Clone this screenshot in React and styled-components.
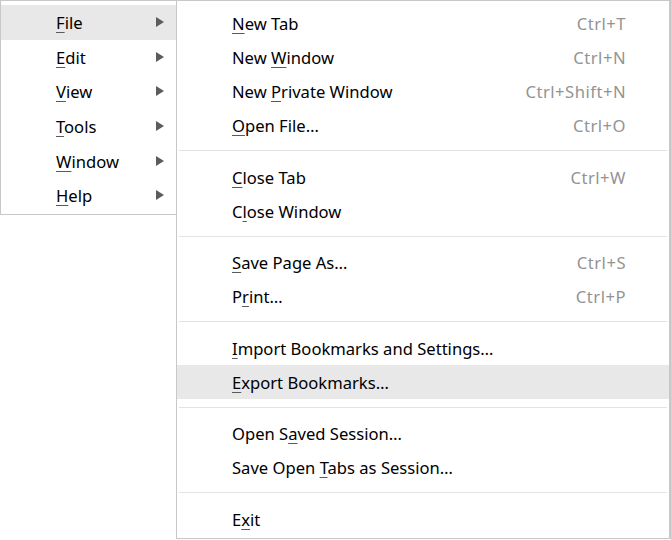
import React from 'react';
import styled, { createGlobalStyle } from 'styled-components';

const GlobalStyle = createGlobalStyle`
  body {
    margin: 0;
    background: #ffffff;
    font-family: 'Noto Sans', 'Open Sans', sans-serif;
    color: #000000;
  }
`;

const Cascade = styled.div`
  display: flex;
  align-items: flex-start;
`;

const MainMenu = styled.div`
  width: 177px;
  box-sizing: border-box;
  padding: 4px 0 1.5px;
  border: 1px solid #c8c8c8;
  background: #ffffff;
  position: relative;
  z-index: 1;
`;

const SubMenu = styled.div`
  width: 495px;
  box-sizing: border-box;
  margin-left: -1px;
  padding: 5px 0 2.5px;
  border: 1px solid #c8c8c8;
  border-right-width: 2px;
  background: #ffffff;
`;

const MainItem = styled.div`
  display: flex;
  align-items: center;
  justify-content: space-between;
  height: 34.6px;
  padding: 1px 12px 0 55px;
  box-sizing: border-box;
  font-size: 16.6px;
  background: ${(props) => (props.active ? '#e8e8e8' : 'transparent')};
`;

const Item = styled.div`
  display: flex;
  align-items: center;
  justify-content: space-between;
  height: 34px;
  padding: 1px 43px 0 55px;
  box-sizing: border-box;
  font-size: 16.6px;
  background: ${(props) => (props.active ? '#e8e8e8' : 'transparent')};
`;

const Label = styled.span`
  white-space: pre;
`;

const Key = styled.span`
  text-decoration: underline;
  text-decoration-color: #5a5a5a;
  text-decoration-thickness: 1px;
  text-underline-offset: 3px;
`;

const Shortcut = styled.span`
  color: #939393;
  letter-spacing: 0.5px;
`;

const Arrow = styled.span`
  width: 0;
  height: 0;
  margin-top: -1px;
  border-top: 5px solid transparent;
  border-bottom: 5px solid transparent;
  border-left: 8px solid #5c5c5c;
`;

const Separator = styled.div`
  height: 1px;
  margin: 8px 2px 8.5px;
  background: #e2e2e2;
`;

const mainItems = [
  ['', 'F', 'ile'],
  ['', 'E', 'dit'],
  ['', 'V', 'iew'],
  ['', 'T', 'ools'],
  ['', 'W', 'indow'],
  ['', 'H', 'elp'],
];

const fileItems = [
  [['', 'N', 'ew Tab'], 'Ctrl+T'],
  [['New ', 'W', 'indow'], 'Ctrl+N'],
  [['New ', 'P', 'rivate Window'], 'Ctrl+Shift+N'],
  [['', 'O', 'pen File…'], 'Ctrl+O'],
  'sep',
  [['', 'C', 'lose Tab'], 'Ctrl+W'],
  [['C', 'l', 'ose Window'], ''],
  'sep',
  [['', 'S', 'ave Page As…'], 'Ctrl+S'],
  [['P', 'r', 'int…'], 'Ctrl+P'],
  'sep',
  [['', 'I', 'mport Bookmarks and Settings…'], ''],
  [['', 'E', 'xport Bookmarks…'], '', true],
  'sep',
  [['Open S', 'a', 'ved Session…'], ''],
  [['Save Open ', 'T', 'abs as Session…'], ''],
  'sep',
  [['E', 'x', 'it'], ''],
];

const MenuLabel = ({ parts }) => (
  <Label>
    {parts[0]}
    <Key>{parts[1]}</Key>
    {parts[2]}
  </Label>
);

const App = () => {
  return (
    <>
      <GlobalStyle />
      <Cascade>
        <MainMenu>
          {mainItems.map((parts, i) => (
            <MainItem key={parts.join('')} active={i === 0}>
              <MenuLabel parts={parts} />
              <Arrow />
            </MainItem>
          ))}
        </MainMenu>
        <SubMenu>
          {fileItems.map((entry, i) =>
            entry === 'sep' ? (
              <Separator key={`sep-${i}`} />
            ) : (
              <Item key={entry[0].join('')} active={entry[2]}>
                <MenuLabel parts={entry[0]} />
                {entry[1] && <Shortcut>{entry[1]}</Shortcut>}
              </Item>
            )
          )}
        </SubMenu>
      </Cascade>
    </>
  );
};

export default App;
